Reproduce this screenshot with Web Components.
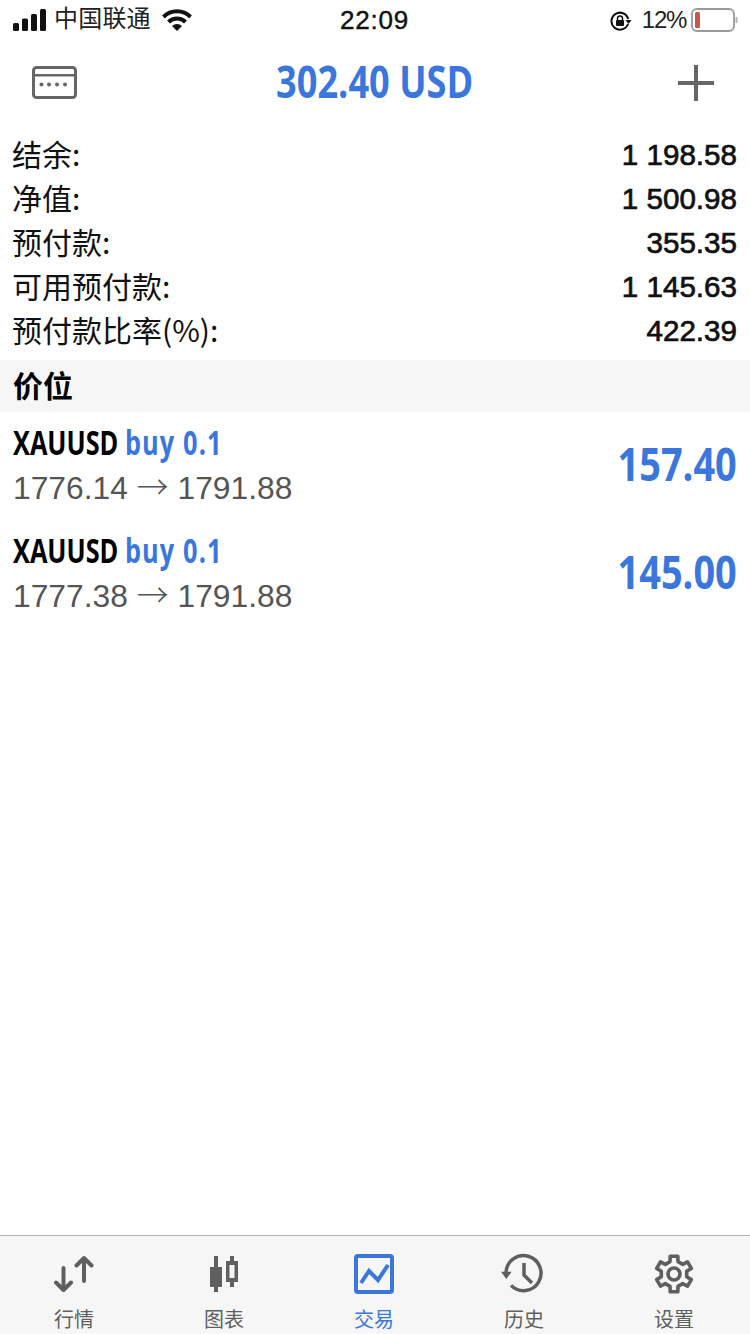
<!DOCTYPE html>
<html lang="zh">
<head>
<meta charset="utf-8">
<title>交易</title>
<style>
  html, body { margin: 0; padding: 0; background: #fff; }
  body { width: 750px; height: 1334px; overflow: hidden; font-family: "Liberation Sans", "Noto Sans CJK SC", sans-serif; }
  trade-screen { height: 1334px; }
</style>
</head>
<body>
<trade-screen>
  <status-bar></status-bar>
  <app-header title="302.40 USD"></app-header>
  <account-summary>
    <summary-row label="结余:" value="1 198.58"></summary-row>
    <summary-row label="净值:" value="1 500.98"></summary-row>
    <summary-row label="预付款:" value="355.35"></summary-row>
    <summary-row label="可用预付款:" value="1 145.63"></summary-row>
    <summary-row label="预付款比率(%):" value="422.39"></summary-row>
  </account-summary>
  <section-title>价位</section-title>
  <position-row symbol="XAUUSD" side="buy 0.1" from="1776.14" to="1791.88" profit="157.40"></position-row>
  <position-row symbol="XAUUSD" side="buy 0.1" from="1777.38" to="1791.88" profit="145.00"></position-row>
  <tab-bar>
    <tab-item label="行情">
      <svg viewBox="0 0 44 40" width="44" height="40" fill="none" stroke="#5f5f5f" stroke-width="4" stroke-linecap="round" stroke-linejoin="round"><path d="M11.500 14V36M4 28.500l7.500 7.500 7.500-7.500"/><path d="M32 27V4M24.500 11.500L32 4l7.500 7.500"/></svg>
    </tab-item>
    <tab-item label="图表">
      <svg viewBox="0 0 32 40" width="32" height="40" fill="#5f5f5f"><path d="M6 2h4v11h4v20h-4v5H6v-5H2V13h4z"/><path fill-rule="evenodd" d="M22 2h4v5h4v21h-4v5h-4v-5h-4V7h4zM21.500 11v13h5V11z"/></svg>
    </tab-item>
    <tab-item label="交易" active>
      <svg viewBox="0 0 40 40" width="40" height="40" fill="none" stroke="#3b76dc" stroke-width="4"><rect x="2" y="2" width="36" height="36" rx="2"/><path d="M7 29l8-12 9 9 10-15"/></svg>
    </tab-item>
    <tab-item label="历史">
      <svg viewBox="0 0 46 42" width="46" height="42" fill="none" stroke="#5f5f5f" stroke-width="3.500"><path d="M5 20A17.500 17.500 0 1 1 10 32.400"/><path d="M0 18.700h10.700L5.300 26z" fill="#5f5f5f" stroke="none"/><path d="M23 10v12l8 8"/></svg>
    </tab-item>
    <tab-item label="设置">
      <gear-icon></gear-icon>
    </tab-item>
  </tab-bar>
</trade-screen>

<script>
// small helper so every element gets its own open shadow root
function shadow(el, html) {
  el.attachShadow({ mode: "open" });
  el.shadowRoot.innerHTML = html;
}

class TradeScreen extends HTMLElement {
  constructor() {
    super();
    shadow(this, `
      <style>
        :host { display: flex; flex-direction: column; width: 750px; background: #fff; }
      </style>
      <slot></slot>`);
  }
}

class StatusBar extends HTMLElement {
  constructor() {
    super();
    shadow(this, `
      <style>
        :host { display: block; height: 40px; color: #111; font-family: "Liberation Sans", "Noto Sans CJK SC", sans-serif; }
        .bar { display: grid; grid-template-columns: 1fr auto 1fr; align-items: center; height: 40px; padding: 0 12px 0 13px; }
        .left, .right { display: flex; align-items: center; }
        .right { justify-content: flex-end; }
        .carrier { font-size: 24px; line-height: 30px; margin: -3px 0 0 7px; letter-spacing: .2px; color: #222; }
        .wifi { margin-left: 11px; }
        .time { font-size: 26px; letter-spacing: .8px; -webkit-text-stroke: .4px #111; margin-left: -2px; }
        .lock { margin-top: 2px; }
        .pct { font-size: 24px; letter-spacing: -1.300px; margin-left: 10px; color: #222; }
        .batt { margin-left: 5px; }
      </style>
      <div class="bar">
        <div class="left">
          <svg width="34" height="22" viewBox="0 0 34 22" fill="#111"><rect x="0" y="14" width="6" height="8" rx="1.500"/><rect x="9" y="9.500" width="6" height="12.500" rx="1.500"/><rect x="18" y="5" width="6" height="17" rx="1.500"/><rect x="27" y="0" width="6" height="22" rx="1.500"/></svg>
          <span class="carrier">中国联通</span>
          <svg class="wifi" width="30" height="22" viewBox="0 0 30 22" fill="none" stroke="#111" stroke-width="4"><path d="M1.500 8a19 19 0 0 1 27 0"/><path d="M6.500 13a12 12 0 0 1 17 0"/><path d="M15 22l-5-5a7 7 0 0 1 10 0z" fill="#111" stroke="none"/></svg>
        </div>
        <div class="time">22:09</div>
        <div class="right">
          <svg class="lock" width="22" height="20" viewBox="0 0 22 20" fill="none" stroke="#111"><path d="M18.200 8A8.500 8.500 0 1 0 18 13" stroke-width="2"/><path d="M15.500 9h6l-3 4z" fill="#111" stroke="none"/><rect x="6" y="9" width="8" height="6" rx="1" fill="#111" stroke="none"/><path d="M7.500 9V7.500a2.500 2.500 0 0 1 5 0V9" stroke-width="1.500"/></svg>
          <span class="pct">12%</span>
          <svg class="batt" width="47" height="24" viewBox="0 0 47 24" fill="none"><rect x="1" y="1" width="42" height="22" rx="5" stroke="#9a9a9a" stroke-width="1.800"/><rect x="4" y="4" width="5" height="16" rx="1.500" fill="#c9554d"/><path d="M45.500 9v6" stroke="#b5b5b5" stroke-width="2"/></svg>
        </div>
      </div>`);
  }
}

class AppHeader extends HTMLElement {
  constructor() {
    super();
    shadow(this, `
      <style>
        :host { display: block; height: 85px; }
        .wrap { display: grid; grid-template-columns: 1fr auto 1fr; align-items: center; height: 85px; padding: 0 32px; }
        .title { color: #3b76dc; font-family: "Open Sans", sans-serif; font-weight: 700; font-size: 45px; white-space: nowrap; transform: scaleX(.804); margin-bottom: 4px; }
        .plus { justify-self: end; display: block; margin-right: 4px; }
      </style>
      <div class="wrap">
        <svg width="45" height="33" viewBox="0 0 45 33"><rect x="1.500" y="1.500" width="42" height="30" rx="3" fill="none" stroke="#666" stroke-width="3"/><rect x="2" y="8" width="41" height="2.500" fill="#666"/><g fill="#666"><circle cx="9.500" cy="18.500" r="2"/><circle cx="17" cy="18.500" r="2"/><circle cx="25" cy="18.500" r="2"/><circle cx="33" cy="18.500" r="2"/></g></svg>
        <div class="title"></div>
        <svg class="plus" width="36" height="36" viewBox="0 0 36 36" stroke="#666" stroke-width="4"><path d="M18 0V36M0 18H36"/></svg>
      </div>`);
    this.shadowRoot.querySelector(".title").textContent = this.getAttribute("title");
  }
}

class AccountSummary extends HTMLElement {
  constructor() {
    super();
    shadow(this, `
      <style>:host { display: block; padding: 8px 0 7px; }</style>
      <slot></slot>`);
  }
}

class SummaryRow extends HTMLElement {
  constructor() {
    super();
    shadow(this, `
      <style>
        :host { display: flex; justify-content: space-between; align-items: center; height: 44px; padding: 0 13px; color: #111; }
        .label { font: 400 30px/44px "Noto Sans CJK SC", sans-serif; margin: -4px 0 0 -1px; }
        .value { font: 400 29.600px "Liberation Sans", sans-serif; -webkit-text-stroke: .7px #111; white-space: pre; }
      </style>
      <span class="label"></span><span class="value"></span>`);
    this.shadowRoot.querySelector(".label").textContent = this.getAttribute("label");
    this.shadowRoot.querySelector(".value").textContent = this.getAttribute("value");
  }
}

class SectionTitle extends HTMLElement {
  constructor() {
    super();
    shadow(this, `
      <style>
        :host { display: flex; align-items: center; box-sizing: border-box; height: 52px; padding: 0 13px 4px; background: #f6f6f6; color: #000; font: 700 30px "Noto Sans CJK SC", sans-serif; }
      </style>
      <slot></slot>`);
  }
}

class PositionRow extends HTMLElement {
  constructor() {
    super();
    shadow(this, `
      <style>
        :host { display: flex; justify-content: space-between; align-items: center; box-sizing: border-box; height: 108px; padding: 0 13px; }
        .info { display: flex; flex-direction: column; gap: 3px; padding-bottom: 2px; }
        .top { font: 700 34px/40px "Open Sans", sans-serif; transform: scaleX(.745); transform-origin: left; white-space: nowrap; color: #000; }
        .side { color: #3b76dc; letter-spacing: 1.500px; }
        .prices { font: 400 31.800px/40px "Liberation Sans", sans-serif; color: #555; white-space: pre; }
        .arrow { font-family: "Noto Sans CJK SC", sans-serif; font-weight: 300; }
        .profit { color: #3b76dc; font: 700 47px "Open Sans", sans-serif; transform: scaleX(.807); transform-origin: right; white-space: nowrap; margin-bottom: 6px; }
      </style>
      <div class="info">
        <div class="top"><span class="sym"></span> <span class="side"></span></div>
        <div class="prices"><span class="from"></span> <span class="arrow">→</span> <span class="to"></span></div>
      </div>
      <div class="profit"></div>`);
    let r = this.shadowRoot;
    r.querySelector(".sym").textContent = this.getAttribute("symbol");
    r.querySelector(".side").textContent = this.getAttribute("side");
    r.querySelector(".from").textContent = this.getAttribute("from");
    r.querySelector(".to").textContent = this.getAttribute("to");
    r.querySelector(".profit").textContent = this.getAttribute("profit");
  }
}

class TabBar extends HTMLElement {
  constructor() {
    super();
    shadow(this, `
      <style>
        :host { display: grid; grid-template-columns: repeat(5, 150px); height: 98px; margin-top: auto; background: #f6f6f6; border-top: 1px solid #b4b4b4; }
      </style>
      <slot></slot>`);
  }
}

class TabItem extends HTMLElement {
  constructor() {
    super();
    shadow(this, `
      <style>
        :host { display: flex; flex-direction: column; align-items: center; box-sizing: border-box; height: 98px; padding-right: 2px; color: #5f5f5f; font: 400 20px "Noto Sans CJK SC", sans-serif; }
        :host([active]) { color: #3b76dc; }
        .icon { height: 44px; margin-top: 16px; display: flex; align-items: center; justify-content: center; }
        .label { margin-top: 8px; line-height: 30px; }
      </style>
      <div class="icon"><slot></slot></div>
      <div class="label"></div>`);
    this.shadowRoot.querySelector(".label").textContent = this.getAttribute("label");
  }
}

// six tooth outline, worked out from angles instead of typed by hand
class GearIcon extends HTMLElement {
  constructor() {
    super();
    let pt = (r, deg) => {
      let a = deg * Math.PI / 180;
      return (20 + r * Math.cos(a)).toFixed(2) + " " + (20 + r * Math.sin(a)).toFixed(2);
    };
    let d = "";
    for (let i = 0; i < 6; i++) {
      let a = i * 60 - 90;
      d += (i ? "L" : "M") + pt(13, a - 18) + "L" + pt(18.200, a - 12) + "L" + pt(18.200, a + 12) + "L" + pt(13, a + 18);
    }
    shadow(this, `
      <style>:host { display: block; width: 40px; height: 40px; }</style>
      <svg viewBox="0 0 40 40" width="40" height="40" fill="none" stroke="#5f5f5f" stroke-width="3.600" stroke-linejoin="round">
        <path d="${d}Z"/><circle cx="20" cy="20" r="6"/>
      </svg>`);
  }
}

customElements.define("trade-screen", TradeScreen);
customElements.define("status-bar", StatusBar);
customElements.define("app-header", AppHeader);
customElements.define("account-summary", AccountSummary);
customElements.define("summary-row", SummaryRow);
customElements.define("section-title", SectionTitle);
customElements.define("position-row", PositionRow);
customElements.define("tab-bar", TabBar);
customElements.define("tab-item", TabItem);
customElements.define("gear-icon", GearIcon);
</script>
</body>
</html>
